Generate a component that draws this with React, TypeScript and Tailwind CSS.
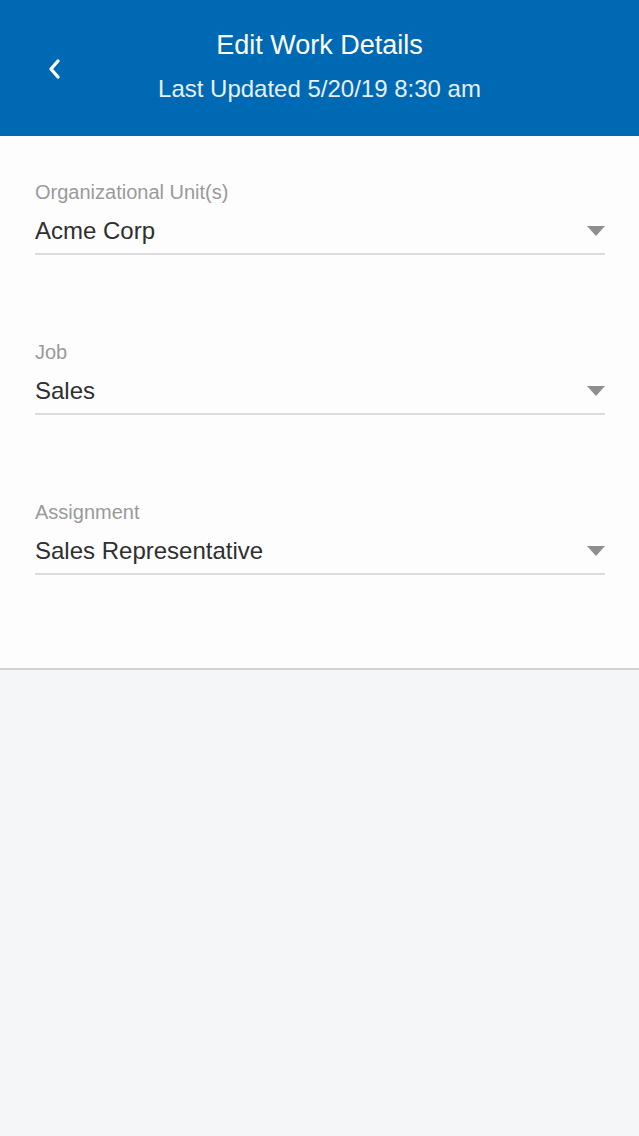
const fields = [
  { label: "Organizational Unit(s)", value: "Acme Corp" },
  { label: "Job", value: "Sales" },
  { label: "Assignment", value: "Sales Representative" },
];

function Caret() {
  return (
    <svg width="18" height="10" viewBox="0 0 18 10">
      <path d="M0 0 H18 L9 10 Z" fill="#8f8f8f" />
    </svg>
  );
}

function SelectField({ label, value }: { label: string; value: string }) {
  return (
    <div>
      <p className="text-[20px] leading-[24px] text-[#9a9a9a]">{label}</p>
      <div className="mt-[12px] flex items-center justify-between border-b-2 border-[#dcdcdc] pb-[7px]">
        <span className="text-[24px] leading-[30px] text-[#2f2f2f]">{value}</span>
        <Caret />
      </div>
    </div>
  );
}

export default function App() {
  return (
    <div className="flex min-h-screen flex-col bg-[#f4f6f8] font-['Liberation_Sans',Arial,sans-serif]">
      <header className="relative flex h-[136px] flex-col items-center bg-[#0069b4] text-white">
        <button className="absolute left-[43px] top-[54px] p-1">
          <svg width="14" height="22" viewBox="0 0 14 22">
            <path d="M11 3 L4 11 L11 19" fill="none" stroke="white" strokeWidth="3.4" strokeLinecap="round" strokeLinejoin="round" />
          </svg>
        </button>
        <h1 className="mt-[29px] text-[27px] leading-[32px]">Edit Work Details</h1>
        <p className="mt-[14px] text-[24px] leading-[28px] text-[#e6f0fa]">Last Updated 5/20/19 8:30 am</p>
      </header>

      <main className="flex flex-col gap-[85px] border-b-2 border-[#d2d2d2] bg-[#fdfdfd] pb-[93px] pl-[35px] pr-[34px] pt-[44px]">
        {fields.map((f) => (
          <SelectField key={f.label} label={f.label} value={f.value} />
        ))}
      </main>
    </div>
  );
}
